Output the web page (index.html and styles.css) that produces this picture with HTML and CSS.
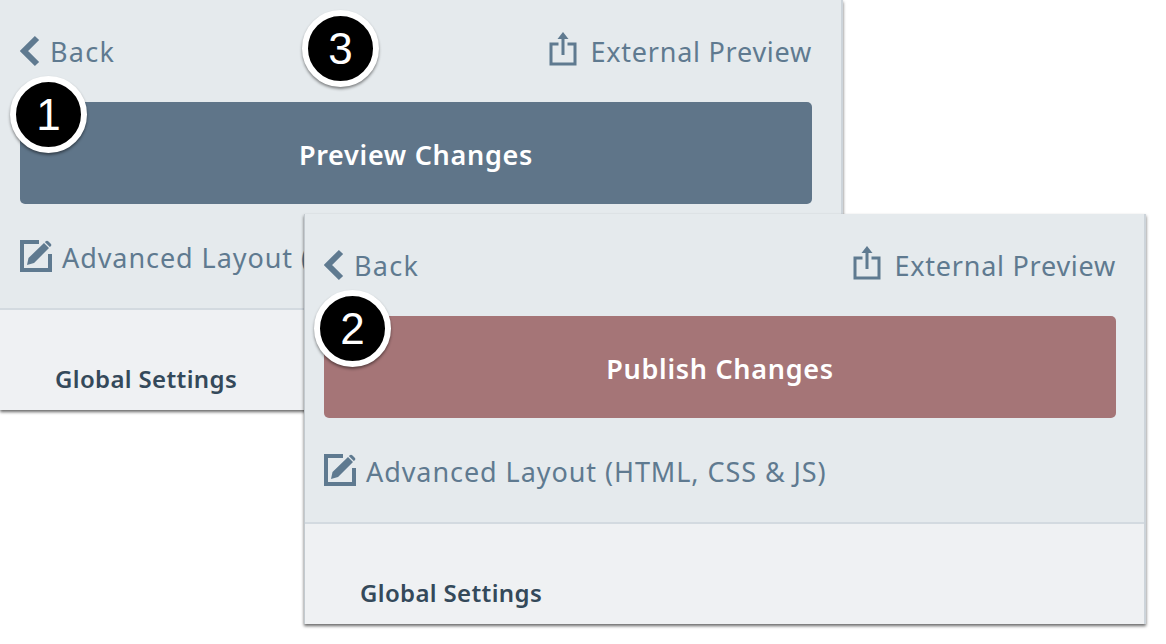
FILE: index.html
```html
<!DOCTYPE html>
<html lang="en">
<head>
    <meta charset="UTF-8">
    <meta name="viewport" content="width=device-width, initial-scale=1.0">
    <title>Preview and Publish Changes</title>
    <link rel="stylesheet" href="styles.css">
</head>
<body>
    <div class="panel panel-back">
        <div class="panel-top">
            <div class="top-row">
                <a class="link link-back">
                    <svg class="icon-back" viewBox="0 0 20 32"><path d="M17 3 4 16l13 13" /></svg>
                    Back
                </a>
                <a class="link">
                    <svg class="icon-share" viewBox="0 0 28 34"><path class="line" d="M9.500 12H2v20h24V12h-7.500M14 23V4" /><path class="head" d="M14 0l5.500 7h-11z" /></svg>
                    External Preview
                </a>
            </div>
            <button class="main-btn btn-preview">Preview Changes</button>
            <a class="link advanced">
                <svg class="icon-edit" viewBox="0 0 32 32"><path class="line" d="M30 14v16H2V2h17" /><path class="head" d="M7 25l1.500-7L24 3l5 5-15 15zM25.500 1.500a2 2 0 0 1 3 0l2 2a2 2 0 0 1 0 3L29.800 7l-5-5z" /></svg>
                Advanced Layout (HTML, CSS &amp; JS)
            </a>
        </div>
        <div class="panel-bottom">Global Settings</div>
    </div>

    <div class="panel panel-front">
        <div class="panel-top">
            <div class="top-row">
                <a class="link link-back">
                    <svg class="icon-back" viewBox="0 0 20 32"><path d="M17 3 4 16l13 13" /></svg>
                    Back
                </a>
                <a class="link">
                    <svg class="icon-share" viewBox="0 0 28 34"><path class="line" d="M9.500 12H2v20h24V12h-7.500M14 23V4" /><path class="head" d="M14 0l5.500 7h-11z" /></svg>
                    External Preview
                </a>
            </div>
            <button class="main-btn btn-publish">Publish Changes</button>
            <a class="link advanced">
                <svg class="icon-edit" viewBox="0 0 32 32"><path class="line" d="M30 14v16H2V2h17" /><path class="head" d="M7 25l1.500-7L24 3l5 5-15 15zM25.500 1.500a2 2 0 0 1 3 0l2 2a2 2 0 0 1 0 3L29.800 7l-5-5z" /></svg>
                Advanced Layout (HTML, CSS &amp; JS)
            </a>
        </div>
        <div class="panel-bottom">Global Settings</div>
    </div>

    <div class="step step-1">1</div>
    <div class="step step-2">2</div>
    <div class="step step-3">3</div>
</body>
</html>
```

FILE: styles.css
```css
html, body {
    margin: 0;
    padding: 0;
}
body {
    width: 1166px;
    height: 644px;
    position: relative;
    overflow: hidden;
    background: white;
    font-family: "Noto Sans", sans-serif;
}
.panel {
    position: absolute;
    width: 841px;
    height: 410px;
    background: #eff1f3;
    border-right: 2px solid #cdd4da;
    box-shadow: 0 2px 3px rgba(0, 0, 0, 0.6);
}
.panel-back {
    left: 0;
    top: 0;
}
.panel-front {
    left: 304px;
    top: 214px;
    border-left: 1px solid #c3cacf;
    width: 839px;
}
.panel-top {
    height: 308px;
    background: #e5eaed;
    border-bottom: 2px solid #d3dae0;
    padding: 0 29px 0 20px;
}
.panel-front .panel-top {
    padding-left: 19px;
    padding-right: 28px;
}
.top-row {
    height: 102px;
    display: flex;
    justify-content: space-between;
    align-items: center;
}
.link {
    display: flex;
    align-items: center;
    color: #5f7a90;
    font-size: 27px;
    letter-spacing: 0.75px;
}
.link-back {
    letter-spacing: 1.3px;
}
.main-btn {
    display: block;
    width: 100%;
    height: 102px;
    padding: 3px 0 0;
    border: none;
    border-radius: 5px;
    color: white;
    font-family: inherit;
    font-size: 27px;
    font-weight: 600;
    letter-spacing: 0.7px;
}
.btn-preview {
    background-color: #5f7589;
}
.btn-publish {
    background-color: #a57577;
}
.advanced {
    height: 106px;
    letter-spacing: 0.93px;
}
svg path {
    fill: none;
    stroke: #5f7a90;
}
svg .head {
    fill: #5f7a90;
    stroke: none;
}
.icon-back {
    width: 20px;
    height: 32px;
    margin-right: 10px;
}
.icon-back path {
    stroke-width: 6;
}
.icon-share {
    width: 28px;
    height: 34px;
    margin-right: 14px;
    margin-top: -4px;
}
.icon-share .line {
    stroke-width: 3;
}
.icon-edit {
    width: 32px;
    height: 32px;
    margin-right: 10px;
    margin-top: -2px;
}
.icon-edit .line {
    stroke-width: 4;
}
.panel-bottom {
    padding: 51px 0 0 55px;
    color: #34495a;
    font-size: 24px;
    line-height: 36px;
    font-weight: 600;
    letter-spacing: 0.35px;
}
.step {
    position: absolute;
    width: 77px;
    height: 77px;
    box-sizing: border-box;
    border: 6px solid white;
    border-radius: 50%;
    background: black;
    color: white;
    box-shadow: 0 2px 3px rgba(0, 0, 0, 0.45);
    font-family: "Liberation Sans", sans-serif;
    font-size: 44px;
    line-height: 66px;
    text-align: center;
}
.step-1 {
    left: 10px;
    top: 76px;
}
.step-2 {
    left: 314px;
    top: 290px;
}
.step-3 {
    left: 302px;
    top: 10px;
}
```
